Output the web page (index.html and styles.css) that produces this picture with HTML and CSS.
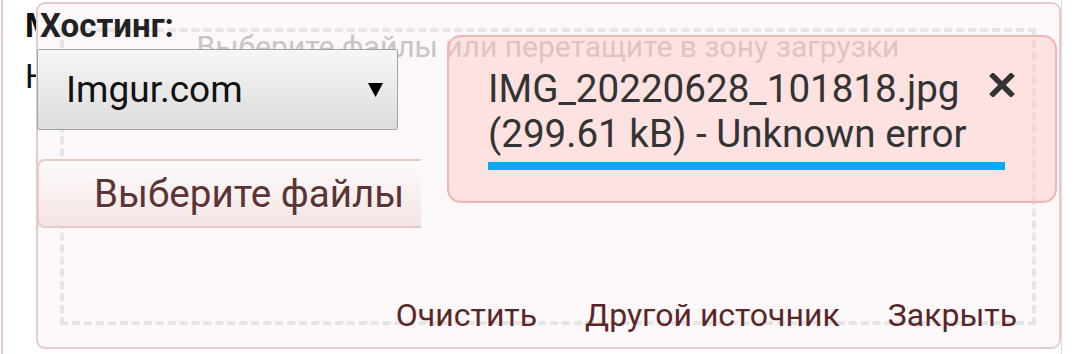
FILE: index.html
```html
<!DOCTYPE html>
<html lang="ru">
<head>
  <meta charset="UTF-8">
  <title>Загрузка файлов</title>
  <meta name="viewport" content="width=device-width, initial-scale=1.0">
  <link rel="stylesheet" href="styles.css">
</head>
<body>

  <div class="page">
    <p class="under under-bold">Медиа</p>
    <p class="under">Нет</p>

    <div class="dialog">
      <div class="dropzone">
        <p class="dropzone-hint">Выберите файлы или перетащите в зону загрузки</p>
      </div>
      <div class="dialog-actions">
        <a href="#">Очистить</a>
        <a href="#">Другой источник</a>
        <a href="#">Закрыть</a>
      </div>
    </div>

    <div class="hosting">
      <div class="hosting-label">Хостинг:</div>
      <div class="hosting-select">
        <span>Imgur.com</span>
        <svg width="15" height="14" viewBox="0 0 15 14"><polygon points="0,0 15,0 7.5,14" fill="#000"/></svg>
      </div>
      <div class="choose-wrap">
        <button class="choose-btn">Выберите файлы</button>
      </div>
    </div>

    <div class="file-card">
      <div class="file-name">IMG_20220628_101818.jpg<br>(299.61 kB) - Unknown error</div>
      <div class="file-progress"></div>
      <span class="file-remove">
        <svg width="26" height="24" viewBox="0 0 26 24"><path d="M4 3 L22 21 M22 3 L4 21" stroke="#333" stroke-width="5.5" stroke-linecap="square"/></svg>
      </span>
    </div>
  </div>

</body>
</html>
```

FILE: styles.css
```css
body {
  font-family: Roboto, "Noto Sans", sans-serif;
  margin: 0;
  padding: 0;
  background: #fff;
  width: 1080px;
  height: 354px;
  overflow: hidden;
}

.page {
  position: relative;
  margin-left: 1px;
  width: 1061px;
  height: 354px;
  border-left: 2px solid #e8cfcf;
  border-right: 1px solid #e4d8d8;
  padding-left: 22px;
  box-sizing: border-box;
}

.under {
  margin: 0;
  padding-top: 6px;
  font-size: 33px;
  color: #111;
  height: 45px;
}

.under-bold {
  font-weight: bold;
}

.dialog {
  position: absolute;
  left: 33px;
  top: 2px;
  width: 1025px;
  height: 347px;
  box-sizing: border-box;
  border: 2px solid #e7cbcb;
  border-radius: 9px;
  background: #fcf8f9;
}

.dropzone {
  margin: 24px 0 0 22px;
  width: 976px;
  height: 297px;
  box-sizing: border-box;
  border: 4px dashed #e6e4e5;
}

.dropzone-hint {
  margin: -3px 0 0;
  text-align: center;
  font-size: 30px;
  color: #c9c3c4;
}

.dialog-actions {
  display: flex;
  justify-content: flex-end;
  gap: 48px;
  margin-top: -29px;
  padding-right: 42px;
}

.dialog-actions a {
  font-size: 32px;
  color: #5a2727;
  text-decoration: none;
}

.hosting {
  position: absolute;
  left: 34px;
  top: 6px;
}

.hosting-label {
  padding-left: 3px;
  font-size: 33px;
  font-weight: bold;
  color: #222;
}

.hosting-select {
  display: flex;
  align-items: center;
  justify-content: space-between;
  margin-top: 4px;
  width: 361px;
  height: 81px;
  box-sizing: border-box;
  padding: 0 14px 0 28px;
  border: 1px solid #a2a2a2;
  border-radius: 2px;
  background: linear-gradient(#f6f6f6, #dcdcdc);
  font-size: 37px;
  color: #111;
}

.choose-wrap {
  margin-top: 29px;
  width: 384px;
  overflow: hidden;
}

.choose-btn {
  display: block;
  width: 460px;
  height: 69px;
  padding: 0 0 0 55px;
  text-align: left;
  border: 2px solid #e8caca;
  border-radius: 8px;
  background: linear-gradient(#fefbfb, #f3e4e4);
  box-shadow: 0 2px 4px rgba(90, 40, 40, 0.08);
  font-family: Roboto, "Noto Sans", sans-serif;
  font-size: 38.6px;
  color: #5c3434;
  text-shadow: 0 1px 0 #fff;
}

.file-card {
  position: absolute;
  left: 444px;
  top: 35px;
  width: 610px;
  height: 168px;
  box-sizing: border-box;
  padding: 29px 0 0 39px;
  border: 2px solid #efb4b4;
  border-radius: 14px;
  background: rgba(255, 196, 194, 0.42);
}

.file-name {
  font-size: 38.6px;
  line-height: 45px;
  color: #333;
}

.file-progress {
  margin-top: 6px;
  width: 517px;
  height: 8px;
  background: #03a9f4;
}

.file-remove {
  position: absolute;
  top: 36px;
  right: 40px;
  line-height: 0;
}
```
